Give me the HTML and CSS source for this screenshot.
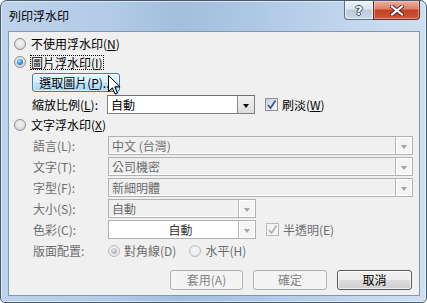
FILE: index.html
```html
<!DOCTYPE html>
<html lang="zh-Hant">
<head>
<meta charset="utf-8">
<title>列印浮水印</title>
<link rel="stylesheet" href="styles.css">
</head>
<body>
<div class="window">
  <div class="titlebar">
    <span class="title">列印浮水印</span>
    <div class="caption-btns">
      <div class="cbtn help"><span>?</span></div>
      <div class="cbtn close">
        <svg width="14" height="11" viewBox="0 0 14 11"><path d="M2 1.5L12 9.5M12 1.5L2 9.5" stroke="#5a1e12" stroke-width="4" stroke-linecap="square"/><path d="M2 1.5L12 9.5M12 1.5L2 9.5" stroke="#fff" stroke-width="2.2" stroke-linecap="square"/></svg>
      </div>
    </div>
  </div>
  <div class="client">
    <div class="opt r1"><span class="radio"></span><span class="otext">不使用浮水印(<u>N</u>)</span></div>
    <div class="opt r2"><span class="radio checked"></span><span class="otext focus">圖片浮水印(<u>I</u>)</span></div>
    <div class="pickrow">
      <div class="btn hover pick">選取圖片(<u>P</u>)...</div>
      <svg class="cursor" width="14" height="22" viewBox="0 0 14 22"><path d="M1.5 1.5V17.5L5.3 13.8L8 20L10.4 19L7.8 12.8H13Z" fill="rgba(0,0,0,.25)" transform="translate(1 1)"/><path d="M1.5 1.5V17.5L5.3 13.8L8 20L10.4 19L7.8 12.8H13Z" fill="#fff" stroke="#000" stroke-width="1" stroke-linejoin="miter"/></svg>
    </div>
    <div class="scale-row">
      <span class="lbl">縮放比例(<u>L</u>):</span>
      <div class="combo small"><span class="ctext">自動</span><span class="arrow"></span></div>
      <span class="check on"><svg width="11" height="11" viewBox="0 0 11 11"><path d="M2 6L4.5 9L9.5 1.5" fill="none" stroke="#3f55a0" stroke-width="1.8"/></svg></span>
      <span class="ctext2">刷淡(<u>W</u>)</span>
    </div>
    <div class="opt r3"><span class="radio"></span><span class="otext">文字浮水印(<u>X</u>)</span></div>
    <div class="fields">
      <span class="lbl dis">語言(L):</span>
      <div class="combo wide disabled"><span class="ctext">中文 (台灣)</span><span class="arrow"></span></div>
      <span class="lbl dis">文字(T):</span>
      <div class="combo wide disabled"><span class="ctext">公司機密</span><span class="arrow"></span></div>
      <span class="lbl dis">字型(F):</span>
      <div class="combo wide disabled"><span class="ctext">新細明體</span><span class="arrow"></span></div>
      <span class="lbl dis">大小(S):</span>
      <div class="combo small disabled"><span class="ctext">自動</span><span class="arrow"></span></div>
      <span class="lbl dis">色彩(C):</span>
      <div class="color-row">
        <div class="combo small disabled white"><span class="ctext center">自動</span><span class="arrow"></span></div>
        <span class="check dis"><svg width="11" height="11" viewBox="0 0 11 11"><path d="M2 6L4.5 9L9.5 1.5" fill="none" stroke="#b4b4b4" stroke-width="1.8"/></svg></span>
        <span class="ctext2 dis">半透明(E)</span>
      </div>
      <span class="lbl dis">版面配置:</span>
      <div class="layout-row">
        <span class="radio dis checked"></span><span class="rtext dis">對角線(D)</span>
        <span class="radio dis gap"></span><span class="rtext dis">水平(H)</span>
      </div>
    </div>
    <div class="footer">
      <div class="btn disabled b1">套用(A)</div>
      <div class="btn disabled b2">確定</div>
      <div class="btn normal b3">取消</div>
    </div>
  </div>
</div>
</body>
</html>
```

FILE: styles.css
```css
* { box-sizing: border-box; }
html, body { margin: 0; padding: 0; }
body {
  width: 427px;
  height: 303px;
  overflow: hidden;
  background: #ffffff;
  font-family: "Noto Sans CJK TC", "Noto Sans", sans-serif;
  font-size: 12px;
  color: #000;
}
u { text-decoration: underline; text-underline-offset: 1px; }

.window {
  width: 427px;
  height: 303px;
  border: 1px solid #4b5b6e;
  border-radius: 7px 7px 5px 5px;
  background: linear-gradient(90deg, #bed3eb 0%, #b3cbe6 25%, #a3bfdd 42%, #aec8e4 60%, #c4d8ee 85%, #cddff1 100%);
  padding: 0 6px 6px 7px;
  display: flex;
  flex-direction: column;
  box-shadow: inset 0 0 0 1px rgba(255,255,255,0.5);
}

.titlebar {
  height: 30px;
  margin: 0 -6px 0 -7px;
  padding: 0 6px 0 8px;
  display: flex;
  align-items: flex-start;
}
.title {
  margin-top: 8px;
  line-height: 14px;
  font-size: 12px;
  color: #000;
}
.caption-btns {
  margin-left: auto;
  display: flex;
}
.cbtn {
  height: 19px;
  display: flex;
  align-items: center;
  justify-content: center;
  border: 1px solid #5f6f82;
  border-top: none;
}
.help {
  width: 29px;
  border-right: none;
  border-radius: 0 0 0 4px;
  background: linear-gradient(#eef3f8 0%, #dae4ee 45%, #bccbdb 50%, #cad8e6 100%);
  box-shadow: inset 0 0 0 1px rgba(255,255,255,0.6);
}
.help span {
  font-family: "DejaVu Sans", sans-serif;
  font-weight: bold;
  font-size: 13px;
  line-height: 13px;
  color: #fff;
  text-shadow: 1px 0 0 #3e4c5c, -1px 0 0 #3e4c5c, 0 1px 0 #3e4c5c, 0 -1px 0 #3e4c5c;
}
.close {
  width: 47px;
  border-color: #5e3028;
  border-radius: 0 0 4px 0;
  background: linear-gradient(#eab0a1 0%, #dc8068 45%, #c43f22 50%, #d0563a 100%);
  box-shadow: inset 0 0 0 1px rgba(255,220,210,0.45);
}

.client {
  flex: 1;
  background: #f0f0f0;
  border: 1px solid #8396ab;
  padding: 0 6px 0 5px;
  display: flex;
  flex-direction: column;
}

.opt {
  height: 18px;
  display: flex;
  align-items: center;
  line-height: 18px;
}
.r1 { margin-top: 3px; }
.otext { margin-left: 5px; }
.focus {
  outline: 1px dotted #000;
  outline-offset: -1px;
  line-height: 15px;
  padding: 0 1px;
  margin-left: 4px;
}

.radio {
  width: 12px;
  height: 12px;
  flex: none;
  border-radius: 50%;
  border: 1px solid #8c9096;
  background: radial-gradient(circle at 50% 40%, #f4f4f4 0%, #e6e6e6 45%, #c9cbcf 100%);
  position: relative;
}
.radio.checked::after {
  content: "";
  position: absolute;
  left: 2px; top: 2px;
  width: 6px; height: 6px;
  border-radius: 50%;
  background: radial-gradient(circle at 40% 35%, #b8ecff 0%, #3a9ae0 45%, #0d4c8c 100%);
}
.radio.dis {
  border-color: #b8bbbf;
  background: radial-gradient(circle at 50% 40%, #f7f7f7 0%, #ececec 60%, #dcdcdc 100%);
}
.radio.dis.checked::after {
  background: radial-gradient(circle at 40% 35%, #e4e4e4 0%, #b9b9b9 60%, #9a9a9a 100%);
}

.pickrow {
  position: relative;
  margin-top: 2px;
  height: 19px;
  display: flex;
}
.btn {
  display: flex;
  align-items: center;
  justify-content: center;
  border-radius: 3px;
  font-size: 12px;
  line-height: 14px;
}
.pick {
  margin-left: 18px;
  width: 88px;
  height: 19px;
  border: 1px solid #3c7fb1;
  background: linear-gradient(#eaf6fd 0%, #d9f0fc 50%, #bee6fd 50%, #a7d9f5 100%);
  box-shadow: inset 0 0 0 1px rgba(255,255,255,0.5);
}
.cursor {
  position: absolute;
  left: 93px;
  top: 1px;
}

.scale-row {
  margin-top: 3px;
  height: 19px;
  display: flex;
  align-items: center;
  padding-left: 18px;
}
.lbl {
  width: 75px;
  flex: none;
  line-height: 19px;
  white-space: nowrap;
}
.scale-row .lbl { width: 75px; }

.combo {
  height: 19px;
  display: flex;
  align-items: center;
  border: 1px solid #7f7f7f;
  border-top-color: #6e6e6e;
  background: #fff;
  position: relative;
}
.combo.small { width: 148px; }
.combo.wide { width: 305px; }
.ctext {
  flex: 1;
  padding-left: 3px;
  line-height: 17px;
  white-space: nowrap;
}
.ctext.center { text-align: center; padding-left: 14px; }
.arrow {
  width: 17px;
  height: 17px;
  flex: none;
  border-left: 1px solid #8a8a8a;
  background: linear-gradient(#f2f2f2, #dcdcdc);
  display: flex;
  align-items: center;
  justify-content: center;
  padding-top: 2px;
}
.arrow::after {
  content: "";
  width: 0; height: 0;
  border-top: 4px solid #000;
  border-left: 3.5px solid transparent;
  border-right: 3.5px solid transparent;
}
.combo.disabled {
  border-color: #aeb2b5;
  background: #f0f0f0;
  box-shadow: inset -1px -1px 0 #ffffff;
  color: #6d6d6d;
}
.combo.disabled.white { background: #ffffff; color: #333; box-shadow: none; }
.combo.disabled .arrow {
  border-left: 1px solid #b5b5b5;
  background: #f4f4f4;
  box-shadow: inset 0 0 0 1px #ffffff;
}
.combo.disabled .arrow::after { border-top-color: #a3a3a3; }

.check {
  width: 13px;
  height: 13px;
  flex: none;
  border: 1px solid #8c9096;
  background: linear-gradient(135deg, #c6ccd5 0%, #e8ebef 60%, #f8f8f8 100%);
  display: flex;
  align-items: center;
  justify-content: center;
}
.scale-row .check { margin-left: 10px; }
.check.dis {
  border-color: #b7b9bc;
  background: #f4f4f4;
  margin-left: 10px;
}
.ctext2 {
  margin-left: 4px;
  line-height: 19px;
  white-space: nowrap;
}
.dis { color: #6d6d6d; }

.r3 { margin-top: 2px; }

.fields {
  margin-top: 2px;
  padding-left: 19px;
  display: grid;
  grid-template-columns: 75px auto;
  grid-auto-rows: 19px;
  row-gap: 2px;
  justify-items: start;
  align-items: center;
}
.fields .lbl { line-height: 19px; }
.color-row {
  display: flex;
  align-items: center;
}
.layout-row {
  display: flex;
  align-items: center;
  height: 19px;
  padding-top: 1px;
}
.rtext { margin-left: 4px; line-height: 18px; }
.radio.gap { margin-left: 13px; }

.footer {
  margin-top: 10px;
  display: flex;
  justify-content: flex-end;
  gap: 10px;
  padding-right: 1px;
}
.footer .btn { height: 20px; }
.b1 { width: 73px; }
.b2 { width: 74px; }
.b3 { width: 75px; }
.btn.disabled {
  border: 1px solid #adb2b5;
  background: #f4f4f4;
  color: #838383;
}
.btn.normal {
  border: 1px solid #5a5a5a;
  background: linear-gradient(#f2f2f2 0%, #ebebeb 50%, #dddddd 50%, #cfcfcf 100%);
  box-shadow: inset 0 0 0 1px rgba(255,255,255,0.7);
}
```
